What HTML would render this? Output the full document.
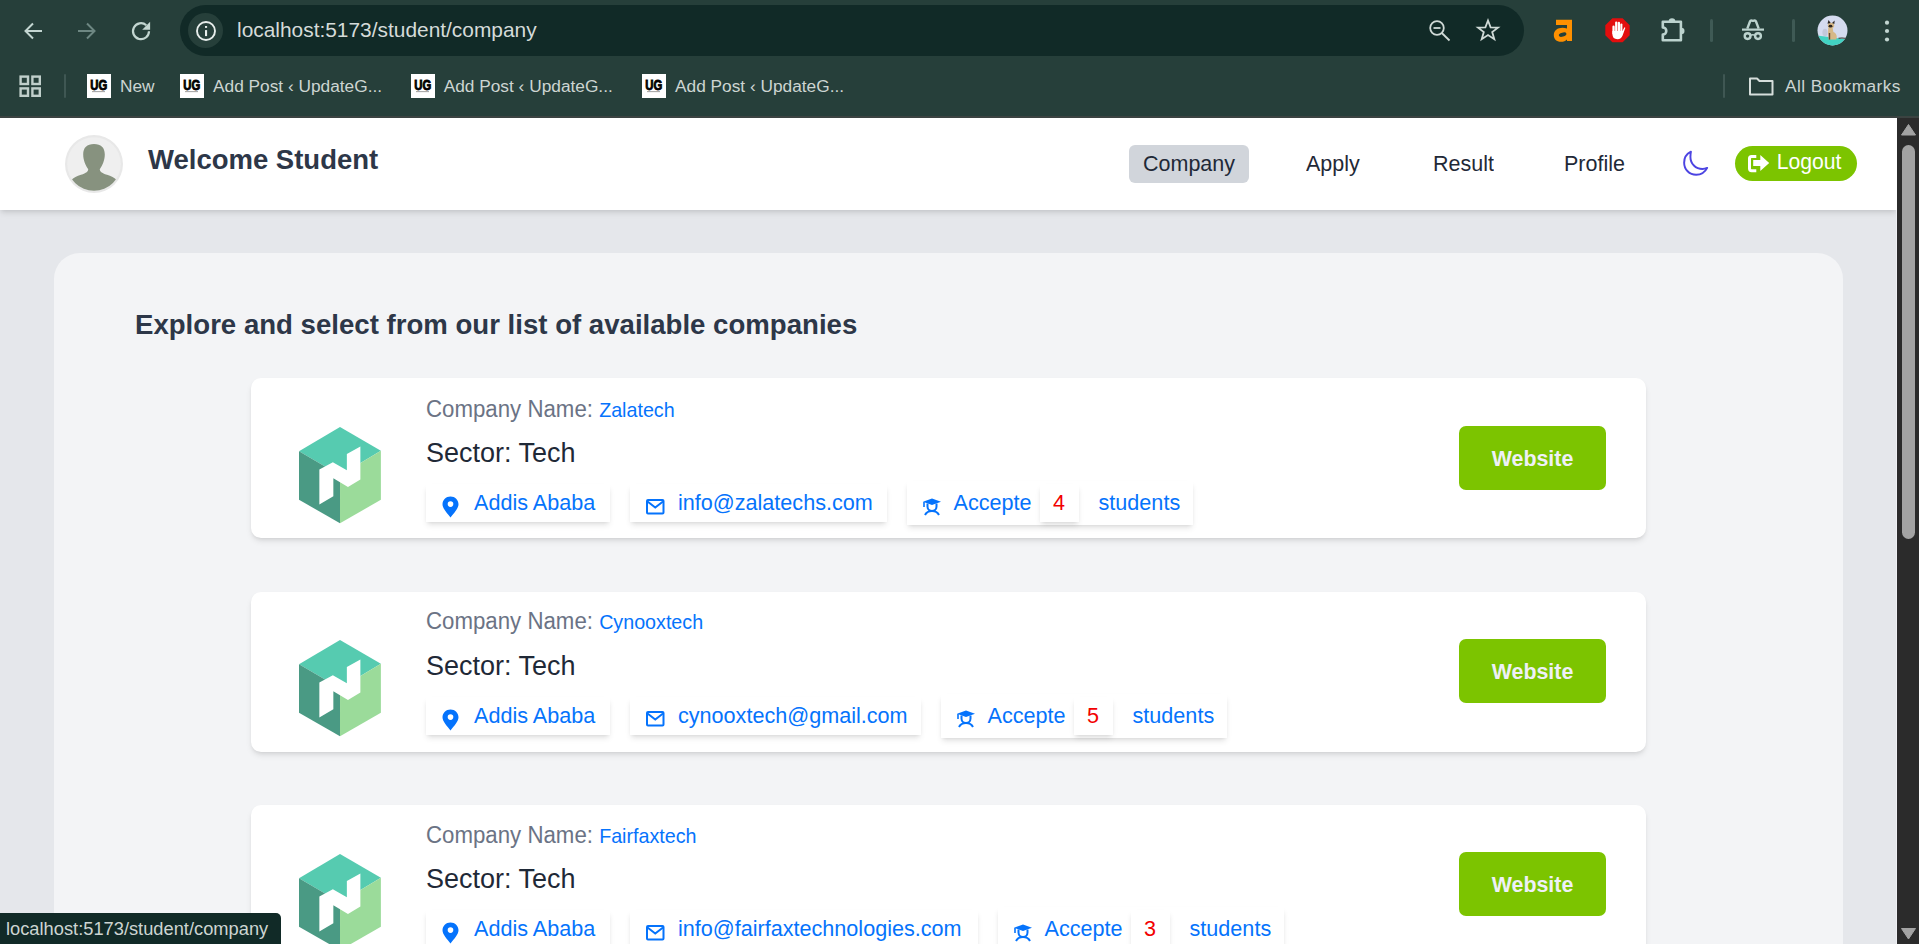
<!DOCTYPE html>
<html><head><meta charset="utf-8">
<style>
*{box-sizing:border-box;margin:0;padding:0}
html,body{width:1919px;height:944px;overflow:hidden;font-family:"Liberation Sans",sans-serif}
body{position:relative;background:#263f3a}
.abs{position:absolute}
svg{position:absolute;overflow:visible}
#chrome{position:absolute;left:0;top:0;width:1919px;height:118px;background:#263f3a}
#omni{position:absolute;left:180px;top:5px;width:1344px;height:51px;border-radius:26px;background:#112a27}
#url{position:absolute;left:237px;top:18px;font-size:20.9px;line-height:24px;color:#d5dbd9;white-space:nowrap}
.bmt{position:absolute;top:75px;font-size:17.3px;line-height:22px;color:#cdd5d2;white-space:nowrap}
.fav{position:absolute;top:74px;width:24px;height:24px;background:#fff}
#botline{position:absolute;left:0;top:116px;width:1919px;height:2px;background:#3b4341}
#page{position:absolute;left:0;top:118px;width:1897px;height:826px;background:#e5e7eb;overflow:hidden}
#sb{position:absolute;left:1897px;top:118px;width:22px;height:826px;background:#2b2b2b}
#header{position:absolute;left:0;top:0;width:1897px;height:92px;background:#fff;box-shadow:0 4px 6px -1px rgba(0,0,0,.1),0 2px 4px -1px rgba(0,0,0,.06)}
#container{position:absolute;left:54px;top:135px;width:1789px;height:900px;background:#f3f4f6;border-radius:26px}
.in{position:absolute;left:0;width:100%;height:100%}
.card{position:absolute;left:197px;width:1395px;height:160px;background:#fff;border-radius:10px;box-shadow:0 4px 6px -1px rgba(0,0,0,.1),0 2px 4px -2px rgba(0,0,0,.1)}
.nav{position:absolute;top:32.5px;transform:scaleY(1.03);transform-origin:0 20.1px;font-size:21.5px;line-height:26px;color:#1f2937;white-space:nowrap}
.cn{position:absolute;left:175px;top:18.7px;transform:scaleY(1.1);transform-origin:0 20.35px;font-size:22.25px;line-height:26px;color:#6b7385;white-space:nowrap}
.cn b{font-weight:normal;color:#0573fc;font-size:19.7px;display:inline-block;transform:scaleY(0.91);transform-origin:0 19.5px}
.sec{position:absolute;left:175px;top:59px;transform:scaleY(1.05);transform-origin:0 24.93px;font-size:27px;line-height:32px;color:#1f2937;white-space:nowrap}
.chips{position:absolute;left:175px;top:106px;height:38px;display:flex;align-items:center}
.chip{position:absolute;top:0;height:38px;background:#fff;box-shadow:0 4px 6px -1px rgba(0,0,0,.1),0 2px 4px -2px rgba(0,0,0,.1);display:flex;align-items:center;font-size:21.6px;color:#0573fc;white-space:nowrap;padding-left:48px;padding-right:14.7px}
.chip svg{left:16px;top:11px}
.chip.acc svg{left:15px !important}
.chip.acc{height:44px;top:-3px;padding-left:46.5px;padding-right:12.5px}
.cnt{display:inline-block;height:38px;line-height:38px;margin:0 20px 0 8px;padding:0 13.5px;background:#fff;color:#f20000;box-shadow:0 4px 6px -1px rgba(0,0,0,.1),0 2px 4px -2px rgba(0,0,0,.1)}
.web{position:absolute;left:1208px;top:48px;width:147px;height:64px;border-radius:7px;background:#7cc400;color:#eef0f7;font-weight:bold;font-size:21.4px;line-height:66px;text-align:center}
</style></head><body>
<div id="chrome">
  <!-- back -->
  <svg style="left:0;top:0" width="200" height="60" viewBox="0 0 200 60">
    <path d="M42 31H26M33 23.5L25.5 31L33 38.5" fill="none" stroke="#c3d6d1" stroke-width="2"/>
    <path d="M78 31H94M87 23.5L94.5 31L87 38.5" fill="none" stroke="#6d8782" stroke-width="2"/>
    <path d="M149 31.2A8 8 0 1 1 146.3 25.2" fill="none" stroke="#c3d6d1" stroke-width="2.2"/>
    <path d="M150.1 21.8V29.7H142.2Z" fill="#c3d6d1"/>
  </svg>
  <div id="omni"></div>
  <div class="abs" style="left:188px;top:12.5px;width:35px;height:35px;border-radius:50%;background:#263f3a"></div>
  <svg style="left:0;top:0" width="260" height="60">
    <circle cx="206" cy="31" r="9" fill="none" stroke="#e8eeec" stroke-width="1.9"/>
    <rect x="205" y="30.1" width="2.1" height="6" fill="#e8eeec"/>
    <rect x="205" y="26" width="2.1" height="1.9" fill="#e8eeec"/>
  </svg>
  <div id="url">localhost:5173/student/company</div>
  <svg style="left:1400px;top:0" width="160" height="60">
    <circle cx="37" cy="28" r="6.8" fill="none" stroke="#d0dad7" stroke-width="1.8"/>
    <path d="M33.5 28H40.5" stroke="#d0dad7" stroke-width="1.8"/>
    <path d="M41.8 33L49.5 40.5" stroke="#d0dad7" stroke-width="1.8"/>
    <path d="M88 20.5L90.6 27.4L98 27.6L92.2 32.1L94.3 39.2L88 35.1L81.7 39.2L83.8 32.1L78 27.6L85.4 27.4Z" fill="none" stroke="#d0dad7" stroke-width="1.8" stroke-linejoin="miter"/>
  </svg>
  <!-- extensions -->
  <svg style="left:1540px;top:0" width="240" height="60" viewBox="1540 0 240 60">
    <path d="M1556 19.8H1572V41H1567V39.5C1565.5 41 1563.5 41.8 1561 41.8C1556.5 41.8 1553.8 39 1553.8 35C1553.8 30.5 1557.5 27.7 1562.5 27.7C1564 27.7 1565.7 28 1567 28.5V25.1H1556Z" fill="#ff9000"/>
    <ellipse cx="1562.6" cy="34.6" rx="3.9" ry="2" transform="rotate(-15 1562.6 34.6)" fill="#263f3a"/>
    <path d="M1612.4 18.2H1622.6L1629.7 25.3V35.2L1622.6 42.3H1612.4L1605.3 35.2V25.3Z" fill="#e30e0e"/>
    <g fill="#fff">
      <rect x="1612.4" y="25.6" width="2.3" height="9" rx="1.15"/>
      <rect x="1615.1" y="21.4" width="2.3" height="12" rx="1.15"/>
      <rect x="1617.8" y="21.8" width="2.2" height="12" rx="1.1"/>
      <rect x="1620.3" y="23.4" width="2.1" height="10" rx="1.05"/>
      <path d="M1612.4 31H1622.4L1624.3 27.6Q1625 26.9 1625.3 27.9L1622.6 35.5Q1621.3 39.2 1617.5 39.2Q1612.4 39.2 1612.4 34Z"/>
    </g>
    <path d="M1662.8 21.8H1680.9V40.2H1662.8V34.5A3.5 3.5 0 0 0 1662.8 27.5Z" fill="none" stroke="#bcd3ce" stroke-width="2.6" stroke-linejoin="round"/><path d="M1668.7 21.5A3.3 3.3 0 0 1 1675.3 21.5Z" fill="#bcd3ce"/><path d="M1681.2 27.7A3.3 3.3 0 0 1 1681.2 34.3Z" fill="#bcd3ce"/>
    <path d="M1742 29.6H1764" stroke="#bcd3ce" stroke-width="2.2"/>
    <path d="M1747.3 28.6L1750 21.5Q1750.5 20.2 1752 20.6L1753 20.9L1754 20.6Q1755.5 20.2 1756 21.5L1758.7 28.6" fill="none" stroke="#bcd3ce" stroke-width="2.4" stroke-linejoin="round"/>
    <circle cx="1747.6" cy="36.1" r="2.9" fill="none" stroke="#bcd3ce" stroke-width="2.4"/>
    <circle cx="1758" cy="36.1" r="2.9" fill="none" stroke="#bcd3ce" stroke-width="2.4"/>
    <path d="M1750.5 35.3Q1752.8 34.3 1755.1 35.3" fill="none" stroke="#bcd3ce" stroke-width="1.6"/>
  </svg>
  <div class="abs" style="left:1710px;top:19px;width:3px;height:23px;border-radius:1.5px;background:#3f5a55"></div>
  <div class="abs" style="left:1791.5px;top:19px;width:3px;height:23px;border-radius:1.5px;background:#3f5a55"></div>
  <svg style="left:1817.1px;top:15.1px" width="31" height="31" viewBox="0 0 31 31">
    <defs><clipPath id="av"><circle cx="15.5" cy="15.5" r="15"/></clipPath></defs>
    <g clip-path="url(#av)">
      <rect width="31" height="31" fill="#d5dbef"/>
      <ellipse cx="8" cy="17.5" rx="2.6" ry="3.8" fill="#c3c8da"/>
      <path d="M0 20.6L31 24.6V31H0Z" fill="#42d3c3"/>
      <path d="M21.5 23.2Q26 22.6 31 23.6" fill="none" stroke="#3a2e28" stroke-width="1.1"/>
      <path d="M11.3 12.5H15.6L16.4 17Q19.8 18.3 19.8 22.2L19.3 24.4H11.6L11 17.5Z" fill="#d6b887"/>
      <ellipse cx="14" cy="10.4" rx="3.2" ry="2.6" fill="#d6b887"/>
      <path d="M10.5 8.8L11.5 5.1L13.7 8Z" fill="#2b2522"/>
      <path d="M15 8L17.7 5.4L17.3 9Z" fill="#2b2522"/>
      <ellipse cx="13.5" cy="11.2" rx="1.9" ry="1.4" fill="#2b2522"/>
      <rect x="11.8" y="18" width="1.4" height="6.6" fill="#5a4330"/>
    </g>
  </svg>
  <svg style="left:1880px;top:18px" width="14" height="26">
    <circle cx="7" cy="4.7" r="2.1" fill="#c3d6d1"/>
    <circle cx="7" cy="13" r="2.1" fill="#c3d6d1"/>
    <circle cx="7" cy="21.5" r="2.1" fill="#c3d6d1"/>
  </svg>
  <!-- bookmarks bar -->
  <svg style="left:0;top:60px" width="70" height="40">
    <g fill="none" stroke="#c0cfcb" stroke-width="2.4">
      <rect x="20.6" y="16.6" width="7.4" height="7.4"/>
      <rect x="32.4" y="16.6" width="7.4" height="7.4"/>
      <rect x="20.6" y="28.4" width="7.4" height="7.4"/>
      <rect x="32.4" y="28.4" width="7.4" height="7.4"/>
    </g>
  </svg>
  <div class="abs" style="left:63.5px;top:74px;width:2px;height:24px;border-radius:1px;background:#3f5753"></div>
  <div class="fav" style="left:87px"><svg style="left:0;top:0" width="24" height="24" viewBox="0 0 24 24"><text x="3.2" y="15.6" font-family="Liberation Sans" font-weight="bold" font-size="15" textLength="17" lengthAdjust="spacingAndGlyphs" fill="#000" stroke="#000" stroke-width="0.9">UG</text><rect x="5" y="17.3" width="13" height="0.8" fill="#888"/></svg></div><div class="bmt" style="left:120px">New</div>
  <div class="fav" style="left:180px"><svg style="left:0;top:0" width="24" height="24" viewBox="0 0 24 24"><text x="3.2" y="15.6" font-family="Liberation Sans" font-weight="bold" font-size="15" textLength="17" lengthAdjust="spacingAndGlyphs" fill="#000" stroke="#000" stroke-width="0.9">UG</text><rect x="5" y="17.3" width="13" height="0.8" fill="#888"/></svg></div><div class="bmt" style="left:213px">Add Post ‹ UpdateG...</div>
  <div class="fav" style="left:411px"><svg style="left:0;top:0" width="24" height="24" viewBox="0 0 24 24"><text x="3.2" y="15.6" font-family="Liberation Sans" font-weight="bold" font-size="15" textLength="17" lengthAdjust="spacingAndGlyphs" fill="#000" stroke="#000" stroke-width="0.9">UG</text><rect x="5" y="17.3" width="13" height="0.8" fill="#888"/></svg></div><div class="bmt" style="left:443.7px">Add Post ‹ UpdateG...</div>
  <div class="fav" style="left:642px"><svg style="left:0;top:0" width="24" height="24" viewBox="0 0 24 24"><text x="3.2" y="15.6" font-family="Liberation Sans" font-weight="bold" font-size="15" textLength="17" lengthAdjust="spacingAndGlyphs" fill="#000" stroke="#000" stroke-width="0.9">UG</text><rect x="5" y="17.3" width="13" height="0.8" fill="#888"/></svg></div><div class="bmt" style="left:675px">Add Post ‹ UpdateG...</div>
  <div class="abs" style="left:1722.5px;top:74px;width:2px;height:24px;border-radius:1px;background:#3f5753"></div>
  <svg style="left:1745px;top:73px" width="32" height="26">
    <path d="M5 5.5H12L14.5 8H27.5V21.5H5Z" fill="none" stroke="#d6dedb" stroke-width="2" stroke-linejoin="round"/>
  </svg>
  <div class="bmt" style="left:1785px;letter-spacing:0.42px">All Bookmarks</div>
  <div id="botline"></div>
</div>
<div id="page">
  <div id="header">
    <div class="abs" style="left:65px;top:17px;width:58px;height:58px;border-radius:50%;background:#e8e8e8;overflow:hidden">
      <svg style="left:0;top:0" width="58" height="58" viewBox="0 0 58 58">
        <defs><clipPath id="avc"><circle cx="29" cy="29" r="26.8"/></clipPath></defs>
        <circle cx="29" cy="29" r="26.8" fill="#efefef"/>
        <path clip-path="url(#avc)" d="M29 9C36 9 39.8 12.5 39.8 19.5C39.8 25.5 37.3 30.5 34.8 34.2C34.8 36.3 36.5 38 42 39.8C46 41 49.5 42.8 52 45.5L52 58L6 58L6 45.5C8.5 42.8 12 41 16 39.8C21.5 38 23.2 36.3 23.2 34.2C20.7 30.5 18.2 25.5 18.2 19.5C18.2 12.5 22 9 29 9Z" fill="#87927f"/>
      </svg>
    </div>
    <div class="abs" style="left:148px;top:26px;font-size:27.5px;line-height:32px;font-weight:bold;color:#2d3748;white-space:nowrap">Welcome Student</div>
    <div class="abs" style="left:1129px;top:27px;width:120px;height:38px;border-radius:6px;background:#d1d5db"></div>
    <div class="nav" style="left:1143px">Company</div>
    <div class="nav" style="left:1306px">Apply</div>
    <div class="nav" style="left:1433px">Result</div>
    <div class="nav" style="left:1564px">Profile</div>
    <svg style="left:1680.6px;top:30.4px" width="33.5" height="33.5" viewBox="0 0 32 32">
      <path d="M9.5 3.5C5.5 5.5 3 9.5 3 14C3 20.5 8 25.5 14.5 25.5C19 25.5 23 23 25 19C23.5 19.6 22 20 20.5 20C14 20 9 15 9 8.5C9 6.8 9.2 5 9.5 3.5Z" fill="none" stroke="#4c44e2" stroke-width="1.85" stroke-linejoin="round"/>
    </svg>
    <div class="abs" style="left:1735px;top:28px;width:122px;height:35px;border-radius:18px;background:#7cc400"></div>
    <svg style="left:1740px;top:35.2px" width="32" height="22" viewBox="1740 154 32 22">
      <path d="M1756.3 157.4H1751.6Q1749.5 157.4 1749.5 159.5V169.6Q1749.5 171.7 1751.6 171.7H1756.3" fill="none" stroke="#fff" stroke-width="3"/>
      <path d="M1753.2 160.9H1760.3V156L1769.2 164.1L1760.3 172.1V167.1H1753.2Z" fill="#fff"/>
    </svg>
    <div class="abs" style="left:1776.7px;top:30.8px;font-size:21.2px;transform:scaleY(1.066);transform-origin:0 20px;line-height:26px;color:#fff;white-space:nowrap">Logout</div>
  </div>
  <div id="container">
    <div class="abs" style="left:81px;top:56px;font-size:27.6px;line-height:32px;font-weight:bold;color:#2d3748;white-space:nowrap">Explore and select from our list of available companies</div>
    <!--CARDS--><div class="card" style="top:125px"><svg style="left:47.6px;top:48.6px" width="81.9" height="96.2" viewBox="117 230 515 605">
<path d="M375 230L632 380L375 534L117 382Z" fill="#56cbb0"/>
<path d="M117 382L375 534L375 835L117 688Z" fill="#4a9a84"/>
<path d="M375 534L632 380L632 688L375 835Z" fill="#9bdb9a"/>
<path d="M245 497L330 452L418 502L418 400L503 352L503 560L425 607L333 553L333 665L245 718Z" fill="#fff"/>
</svg><div class="in" style="top:0px">
  <div class="cn">Company Name: <b>Zalatech</b></div>
  <div class="sec">Sector: Tech</div>
  <div class="chips">
    <div class="chip" style="left:0;width:184px"><svg width="17" height="22" viewBox="0 0 17 22" style="left:15.8px;top:12px"><path d="M8.5 0.5C4 0.5 0.5 4 0.5 8.3C0.5 12.5 5 17 8.5 21.5C12 17 16.5 12.5 16.5 8.3C16.5 4 13 0.5 8.5 0.5Z" fill="#0573fc"/><circle cx="8.5" cy="8.1" r="2.8" fill="#fff"/></svg>Addis Ababa</div>
    <div class="chip" style="left:204px;width:257px"><svg width="19" height="16" viewBox="0 0 19 16" style="left:16px;top:14.5px"><rect x="1" y="1" width="16.5" height="13.5" rx="1" fill="none" stroke="#0573fc" stroke-width="2"/><path d="M1.5 2.5L9.25 8.5L17 2.5" fill="none" stroke="#0573fc" stroke-width="2"/></svg>info@zalatechs.com</div>
    <div class="chip acc" style="left:481px;width:286px"><svg width="20" height="18" viewBox="0 0 20 18" style="left:15.5px;top:16.5px"><path d="M10 0.5L19 3.8L10 7L1 3.8Z" fill="#0573fc"/><path d="M2 4V9" stroke="#0573fc" stroke-width="1.6"/><path d="M5.5 5.5V8.5A4.5 4.5 0 0 0 14.5 8.5V5.5" fill="none" stroke="#0573fc" stroke-width="2"/><path d="M3 17C4.5 14 7 13 10 13C13 13 15.5 14 17 17" fill="none" stroke="#0573fc" stroke-width="2"/></svg>Accepte<span class="cnt">4</span>students</div>
  </div>
  <div class="web">Website</div>
</div></div>
<div class="card" style="top:338.5px"><svg style="left:47.6px;top:48.6px" width="81.9" height="96.2" viewBox="117 230 515 605">
<path d="M375 230L632 380L375 534L117 382Z" fill="#56cbb0"/>
<path d="M117 382L375 534L375 835L117 688Z" fill="#4a9a84"/>
<path d="M375 534L632 380L632 688L375 835Z" fill="#9bdb9a"/>
<path d="M245 497L330 452L418 502L418 400L503 352L503 560L425 607L333 553L333 665L245 718Z" fill="#fff"/>
</svg><div class="in" style="top:-0.8px">
  <div class="cn">Company Name: <b>Cynooxtech</b></div>
  <div class="sec">Sector: Tech</div>
  <div class="chips">
    <div class="chip" style="left:0;width:184px"><svg width="17" height="22" viewBox="0 0 17 22" style="left:15.8px;top:12px"><path d="M8.5 0.5C4 0.5 0.5 4 0.5 8.3C0.5 12.5 5 17 8.5 21.5C12 17 16.5 12.5 16.5 8.3C16.5 4 13 0.5 8.5 0.5Z" fill="#0573fc"/><circle cx="8.5" cy="8.1" r="2.8" fill="#fff"/></svg>Addis Ababa</div>
    <div class="chip" style="left:204px;width:291px"><svg width="19" height="16" viewBox="0 0 19 16" style="left:16px;top:14.5px"><rect x="1" y="1" width="16.5" height="13.5" rx="1" fill="none" stroke="#0573fc" stroke-width="2"/><path d="M1.5 2.5L9.25 8.5L17 2.5" fill="none" stroke="#0573fc" stroke-width="2"/></svg>cynooxtech@gmail.com</div>
    <div class="chip acc" style="left:515px;width:286px"><svg width="20" height="18" viewBox="0 0 20 18" style="left:15.5px;top:16.5px"><path d="M10 0.5L19 3.8L10 7L1 3.8Z" fill="#0573fc"/><path d="M2 4V9" stroke="#0573fc" stroke-width="1.6"/><path d="M5.5 5.5V8.5A4.5 4.5 0 0 0 14.5 8.5V5.5" fill="none" stroke="#0573fc" stroke-width="2"/><path d="M3 17C4.5 14 7 13 10 13C13 13 15.5 14 17 17" fill="none" stroke="#0573fc" stroke-width="2"/></svg>Accepte<span class="cnt">5</span>students</div>
  </div>
  <div class="web">Website</div>
</div></div>
<div class="card" style="top:552px"><svg style="left:47.6px;top:48.6px" width="81.9" height="96.2" viewBox="117 230 515 605">
<path d="M375 230L632 380L375 534L117 382Z" fill="#56cbb0"/>
<path d="M117 382L375 534L375 835L117 688Z" fill="#4a9a84"/>
<path d="M375 534L632 380L632 688L375 835Z" fill="#9bdb9a"/>
<path d="M245 497L330 452L418 502L418 400L503 352L503 560L425 607L333 553L333 665L245 718Z" fill="#fff"/>
</svg><div class="in" style="top:-1px">
  <div class="cn">Company Name: <b>Fairfaxtech</b></div>
  <div class="sec">Sector: Tech</div>
  <div class="chips">
    <div class="chip" style="left:0;width:184px"><svg width="17" height="22" viewBox="0 0 17 22" style="left:15.8px;top:12px"><path d="M8.5 0.5C4 0.5 0.5 4 0.5 8.3C0.5 12.5 5 17 8.5 21.5C12 17 16.5 12.5 16.5 8.3C16.5 4 13 0.5 8.5 0.5Z" fill="#0573fc"/><circle cx="8.5" cy="8.1" r="2.8" fill="#fff"/></svg>Addis Ababa</div>
    <div class="chip" style="left:204px;width:347.5px"><svg width="19" height="16" viewBox="0 0 19 16" style="left:16px;top:14.5px"><rect x="1" y="1" width="16.5" height="13.5" rx="1" fill="none" stroke="#0573fc" stroke-width="2"/><path d="M1.5 2.5L9.25 8.5L17 2.5" fill="none" stroke="#0573fc" stroke-width="2"/></svg>info@fairfaxtechnologies.com</div>
    <div class="chip acc" style="left:572px;width:286px"><svg width="20" height="18" viewBox="0 0 20 18" style="left:15.5px;top:16.5px"><path d="M10 0.5L19 3.8L10 7L1 3.8Z" fill="#0573fc"/><path d="M2 4V9" stroke="#0573fc" stroke-width="1.6"/><path d="M5.5 5.5V8.5A4.5 4.5 0 0 0 14.5 8.5V5.5" fill="none" stroke="#0573fc" stroke-width="2"/><path d="M3 17C4.5 14 7 13 10 13C13 13 15.5 14 17 17" fill="none" stroke="#0573fc" stroke-width="2"/></svg>Accepte<span class="cnt">3</span>students</div>
  </div>
  <div class="web">Website</div>
</div></div><!--/CARDS-->
  </div>
</div>
<div class="abs" style="left:1896px;top:210px;width:1px;height:734px;background:#eff0f4"></div>
<div id="sb">
  <svg style="left:0;top:0" width="22" height="826">
    <path d="M11.5 6.5L18.5 17H4.5Z" fill="#a3a3a3" stroke="#a3a3a3" stroke-width="1" stroke-linejoin="round"/>
    <rect x="5" y="27" width="13" height="394" rx="6.5" fill="#a3a3a3"/>
    <path d="M11.5 821L18.5 810.5H4.5Z" fill="#a3a3a3" stroke="#a3a3a3" stroke-width="1" stroke-linejoin="round"/>
  </svg>
</div>
<div class="abs" style="left:0;top:913px;width:281px;height:31px;background:#112a27;border-top-right-radius:5px"></div>
<div class="abs" style="left:6px;top:918px;font-size:18.3px;line-height:22px;color:#cdd5d2;white-space:nowrap">localhost:5173/student/company</div>
</body></html>
